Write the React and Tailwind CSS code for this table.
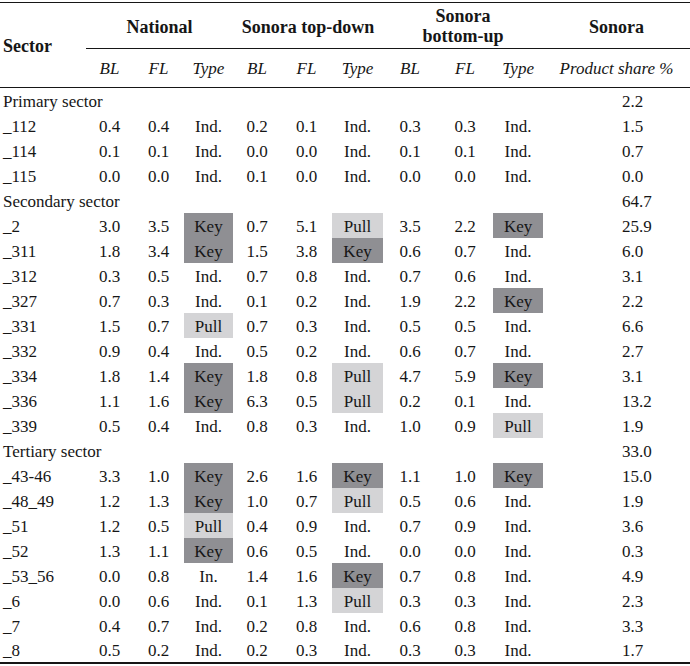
import React from "react";

const rows = [
  { label: "Primary sector", share: "2.2", group: true },
  { label: "_112", v: ["0.4", "0.4", "Ind.", "0.2", "0.1", "Ind.", "0.3", "0.3", "Ind."], share: "1.5" },
  { label: "_114", v: ["0.1", "0.1", "Ind.", "0.0", "0.0", "Ind.", "0.1", "0.1", "Ind."], share: "0.7" },
  { label: "_115", v: ["0.0", "0.0", "Ind.", "0.1", "0.0", "Ind.", "0.0", "0.0", "Ind."], share: "0.0" },
  { label: "Secondary sector", share: "64.7", group: true },
  { label: "_2", v: ["3.0", "3.5", "Key", "0.7", "5.1", "Pull", "3.5", "2.2", "Key"], share: "25.9" },
  { label: "_311", v: ["1.8", "3.4", "Key", "1.5", "3.8", "Key", "0.6", "0.7", "Ind."], share: "6.0" },
  { label: "_312", v: ["0.3", "0.5", "Ind.", "0.7", "0.8", "Ind.", "0.7", "0.6", "Ind."], share: "3.1" },
  { label: "_327", v: ["0.7", "0.3", "Ind.", "0.1", "0.2", "Ind.", "1.9", "2.2", "Key"], share: "2.2" },
  { label: "_331", v: ["1.5", "0.7", "Pull", "0.7", "0.3", "Ind.", "0.5", "0.5", "Ind."], share: "6.6" },
  { label: "_332", v: ["0.9", "0.4", "Ind.", "0.5", "0.2", "Ind.", "0.6", "0.7", "Ind."], share: "2.7" },
  { label: "_334", v: ["1.8", "1.4", "Key", "1.8", "0.8", "Pull", "4.7", "5.9", "Key"], share: "3.1" },
  { label: "_336", v: ["1.1", "1.6", "Key", "6.3", "0.5", "Pull", "0.2", "0.1", "Ind."], share: "13.2" },
  { label: "_339", v: ["0.5", "0.4", "Ind.", "0.8", "0.3", "Ind.", "1.0", "0.9", "Pull"], share: "1.9" },
  { label: "Tertiary sector", share: "33.0", group: true },
  { label: "_43-46", v: ["3.3", "1.0", "Key", "2.6", "1.6", "Key", "1.1", "1.0", "Key"], share: "15.0" },
  { label: "_48_49", v: ["1.2", "1.3", "Key", "1.0", "0.7", "Pull", "0.5", "0.6", "Ind."], share: "1.9" },
  { label: "_51", v: ["1.2", "0.5", "Pull", "0.4", "0.9", "Ind.", "0.7", "0.9", "Ind."], share: "3.6" },
  { label: "_52", v: ["1.3", "1.1", "Key", "0.6", "0.5", "Ind.", "0.0", "0.0", "Ind."], share: "0.3" },
  { label: "_53_56", v: ["0.0", "0.8", "In.", "1.4", "1.6", "Key", "0.7", "0.8", "Ind."], share: "4.9" },
  { label: "_6", v: ["0.0", "0.6", "Ind.", "0.1", "1.3", "Pull", "0.3", "0.3", "Ind."], share: "2.3" },
  { label: "_7", v: ["0.4", "0.7", "Ind.", "0.2", "0.8", "Ind.", "0.6", "0.8", "Ind."], share: "3.3" },
  { label: "_8", v: ["0.5", "0.2", "Ind.", "0.2", "0.3", "Ind.", "0.3", "0.3", "Ind."], share: "1.7" },
];

const widths = [86, 47, 51, 49, 48, 51, 51, 54, 56, 50, 147];

const cellBg = (t) => {
  if (t === "Key") return "bg-[#8f8f93]";
  if (t === "Pull") return "bg-[#d4d4d6]";
  return "";
};

export default function App() {
  return (
    <div className="w-[690px] h-[666px] bg-white pt-[2px] text-[#161616] font-['Liberation_Serif',serif] text-[17px] leading-[20px]">
      <table className="w-[690px] table-fixed border-collapse">
        <colgroup>
          {widths.map((w, i) => (
            <col key={i} style={{ width: w }} />
          ))}
        </colgroup>
        <thead>
          <tr className="h-[46px] border-t border-[#161616] text-[18px]">
            <th rowSpan={2} className="text-left font-bold pl-[3px] pt-[2px] border-b border-[#161616]">
              Sector
            </th>
            <th colSpan={3} className="font-bold pt-[2px] border-b border-[#161616]">National</th>
            <th colSpan={3} className="font-bold pt-[2px] border-b border-[#161616]">Sonora top-down</th>
            <th colSpan={3} className="font-bold border-b border-[#161616]">
              Sonora
              <br />
              bottom-up
            </th>
            <th className="font-bold pt-[2px] border-b border-[#161616]">Sonora</th>
          </tr>
          <tr className="h-[39px] border-b border-[#161616]">
            {["BL", "FL", "Type", "BL", "FL", "Type", "BL", "FL", "Type"].map((h, i) => (
              <th key={i} className="font-normal italic pt-[2px]">{h}</th>
            ))}
            <th className="font-normal italic pt-[2px]">Product share %</th>
          </tr>
        </thead>
        <tbody className="border-b-2 border-[#161616]">
          {rows.map((r) =>
            r.group ? (
              <tr key={r.label} className="h-[25px]">
                <td colSpan={10} className="text-left pl-[3px] pt-[3px] whitespace-nowrap">{r.label}</td>
                <td className="text-left pl-[79px] pt-[3px]">{r.share}</td>
              </tr>
            ) : (
              <tr key={r.label} className="h-[25px]">
                <td className="text-left pl-[3px] pt-[3px]">{r.label}</td>
                {r.v.map((x, i) => (
                  <td key={i} className={`text-center pt-[3px] ${cellBg(x)}`}>{x}</td>
                ))}
                <td className="text-left pl-[79px] pt-[3px]">{r.share}</td>
              </tr>
            )
          )}
        </tbody>
      </table>
    </div>
  );
}
